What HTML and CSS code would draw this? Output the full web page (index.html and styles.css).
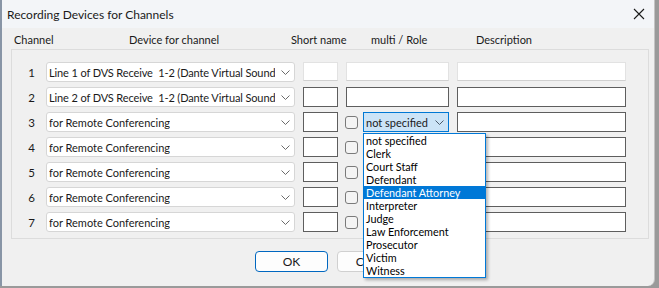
FILE: index.html
```html
<!DOCTYPE html>
<html lang="en">
<head>
  <meta charset="UTF-8" />
  <title>Recording Devices for Channels</title>
  <link rel="stylesheet" href="styles.css">
</head>
<body>

  <div class="window">
    <div class="titlebar">
      <span class="title">Recording Devices for Channels</span>
      <svg class="close" width="12" height="12" viewBox="0 0 12 12">
        <path d="M1 1 L11 11 M11 1 L1 11" stroke="#1a1a1a" stroke-width="1.1" fill="none"/>
      </svg>
    </div>

    <div class="content">
      <div class="headers">
        <span class="h-channel">Channel</span>
        <span class="h-device">Device for channel</span>
        <span class="h-short">Short name</span>
        <span class="h-role">multi / Role</span>
        <span>Description</span>
      </div>

      <div class="group">
        <div class="row">
          <span class="num">1</span>
          <div class="combo"><span class="combo-text long">Line 1 of DVS Receive&nbsp; 1-2 (Dante Virtual Sound</span><svg class="chev" width="9" height="5" viewBox="0 0 9 5"><path d="M0.5 0.5 L4.5 4.5 L8.5 0.5" stroke="#6a6a6a" fill="none"/></svg></div>
          <div class="edit disabled"></div>
          <div class="edit disabled"></div>
          <div class="edit disabled"></div>
        </div>
        <div class="row">
          <span class="num">2</span>
          <div class="combo"><span class="combo-text long">Line 2 of DVS Receive&nbsp; 1-2 (Dante Virtual Sound</span><svg class="chev" width="9" height="5" viewBox="0 0 9 5"><path d="M0.5 0.5 L4.5 4.5 L8.5 0.5" stroke="#6a6a6a" fill="none"/></svg></div>
          <div class="edit"></div>
          <div class="edit"></div>
          <div class="edit"></div>
        </div>
        <div class="row">
          <span class="num">3</span>
          <div class="combo"><span class="combo-text">for Remote Conferencing</span><svg class="chev" width="9" height="5" viewBox="0 0 9 5"><path d="M0.5 0.5 L4.5 4.5 L8.5 0.5" stroke="#6a6a6a" fill="none"/></svg></div>
          <div class="edit"></div>
          <div class="multi">
            <span class="check"></span>
            <div class="role-combo">
              <span class="combo-text">not specified</span>
              <svg class="chev" width="9" height="5" viewBox="0 0 9 5"><path d="M0.5 0.5 L4.5 4.5 L8.5 0.5" stroke="#4a5a6a" fill="none"/></svg>
              <ul class="dropdown">
                <li>not specified</li>
                <li>Clerk</li>
                <li>Court Staff</li>
                <li>Defendant</li>
                <li class="selected">Defendant Attorney</li>
                <li>Interpreter</li>
                <li>Judge</li>
                <li>Law Enforcement</li>
                <li>Prosecutor</li>
                <li>Victim</li>
                <li>Witness</li>
              </ul>
            </div>
          </div>
          <div class="edit"></div>
        </div>
        <div class="row">
          <span class="num">4</span>
          <div class="combo"><span class="combo-text">for Remote Conferencing</span><svg class="chev" width="9" height="5" viewBox="0 0 9 5"><path d="M0.5 0.5 L4.5 4.5 L8.5 0.5" stroke="#6a6a6a" fill="none"/></svg></div>
          <div class="edit"></div>
          <div class="multi"><span class="check"></span></div>
          <div class="edit"></div>
        </div>
        <div class="row">
          <span class="num">5</span>
          <div class="combo"><span class="combo-text">for Remote Conferencing</span><svg class="chev" width="9" height="5" viewBox="0 0 9 5"><path d="M0.5 0.5 L4.5 4.5 L8.5 0.5" stroke="#6a6a6a" fill="none"/></svg></div>
          <div class="edit"></div>
          <div class="multi"><span class="check"></span></div>
          <div class="edit"></div>
        </div>
        <div class="row">
          <span class="num">6</span>
          <div class="combo"><span class="combo-text">for Remote Conferencing</span><svg class="chev" width="9" height="5" viewBox="0 0 9 5"><path d="M0.5 0.5 L4.5 4.5 L8.5 0.5" stroke="#6a6a6a" fill="none"/></svg></div>
          <div class="edit"></div>
          <div class="multi"><span class="check"></span></div>
          <div class="edit"></div>
        </div>
        <div class="row">
          <span class="num">7</span>
          <div class="combo"><span class="combo-text">for Remote Conferencing</span><svg class="chev" width="9" height="5" viewBox="0 0 9 5"><path d="M0.5 0.5 L4.5 4.5 L8.5 0.5" stroke="#6a6a6a" fill="none"/></svg></div>
          <div class="edit"></div>
          <div class="multi"><span class="check"></span></div>
          <div class="edit"></div>
        </div>
      </div>

      <div class="buttons">
        <button class="btn default">OK</button>
        <button class="btn">Cancel</button>
      </div>
    </div>
  </div>

</body>
</html>
```

FILE: styles.css
```css
* {
  margin: 0;
  padding: 0;
  box-sizing: border-box;
}

body {
  width: 659px;
  height: 288px;
  overflow: hidden;
  background: #9a9a9a;
  font-family: Lato, "Noto Sans", sans-serif;
  font-size: 11px;
  color: #1a1a1a;
}

.window {
  width: 655px;
  height: 286px;
  background: #f0f0f0;
  border-left: 2px solid #8895a6;
  border-right: 1px solid #c4c4c4;
  border-bottom-right-radius: 7px;
  overflow: hidden;
}

.titlebar {
  height: 28px;
  background: #f3f5f8;
  display: flex;
  align-items: center;
  justify-content: space-between;
  padding: 0 9px 0 5px;
}

.title {
  font-size: 12px;
  color: #1a1a1a;
}

.content {
  padding-top: 4px;
}

.headers {
  display: flex;
  height: 16px;
  line-height: 16px;
  padding-left: 12px;
  margin-bottom: 1px;
}

.h-channel { width: 115px; }
.h-device  { width: 162px; }
.h-short   { width: 80px; }
.h-role    { width: 105px; }

.group {
  margin-left: 9px;
  width: 638px;
  border: 1px solid #dcdcdc;
  padding: 12px 21px 6px 0;
  display: flex;
  flex-direction: column;
  gap: 5px;
}

.row {
  display: grid;
  grid-template-columns: 26px 249px 35px 103px 169px;
  column-gap: 8px;
  height: 20px;
  align-items: center;
}

.num {
  text-align: right;
  padding-right: 3px;
  font-size: 11.5px;
}

.combo {
  height: 20px;
  background: #ffffff;
  border: 1px solid #d6d6d6;
  border-radius: 3px;
  display: flex;
  align-items: center;
  justify-content: space-between;
  padding: 0 4px 0 2px;
  overflow: hidden;
}

.combo-text {
  white-space: nowrap;
  overflow: hidden;
}

.combo-text.long {
  letter-spacing: -0.12px;
}

.chev {
  flex-shrink: 0;
  margin-left: 2px;
}

.edit {
  height: 20px;
  background: #ffffff;
  border: 1px solid #5e5e5e;
}

.edit.disabled {
  border-color: #e2e2e2;
  border-bottom-color: #d0d0d0;
  height: 19px;
  align-self: start;
}

.multi {
  height: 20px;
  display: flex;
  align-items: center;
  gap: 5px;
}

.check {
  width: 13px;
  height: 13px;
  border: 1px solid #7a7a7a;
  border-radius: 3px;
  background: #f4f4f4;
  margin-left: -1px;
}

.role-combo {
  position: relative;
  width: 86px;
  height: 20px;
  background: #cce4f7;
  border: 1px solid #0078d4;
  display: flex;
  align-items: center;
  justify-content: space-between;
  padding: 0 4px 0 2px;
}

.dropdown {
  position: absolute;
  top: 20px;
  left: -1px;
  width: 123px;
  list-style: none;
  background: #ffffff;
  border: 1px solid #0078d7;
  box-shadow: 2px 2px 3px rgba(0, 0, 0, 0.3);
  z-index: 2;
}

.dropdown li {
  height: 13px;
  line-height: 13px;
  font-size: 10.8px;
  padding-left: 2px;
  color: #000000;
  white-space: nowrap;
}

.dropdown li.selected {
  background: #0078d7;
  color: #ffffff;
}

.buttons {
  display: flex;
  gap: 9px;
  padding-left: 253px;
  margin-top: 12px;
}

.btn {
  width: 73px;
  height: 21px;
  background: #fdfdfd;
  border: 1px solid #d0d0d0;
  border-radius: 4px;
  font-family: inherit;
  font-size: 12px;
  color: #1a1a1a;
}

.btn.default {
  border: 1px solid #0067c0;
}
```
